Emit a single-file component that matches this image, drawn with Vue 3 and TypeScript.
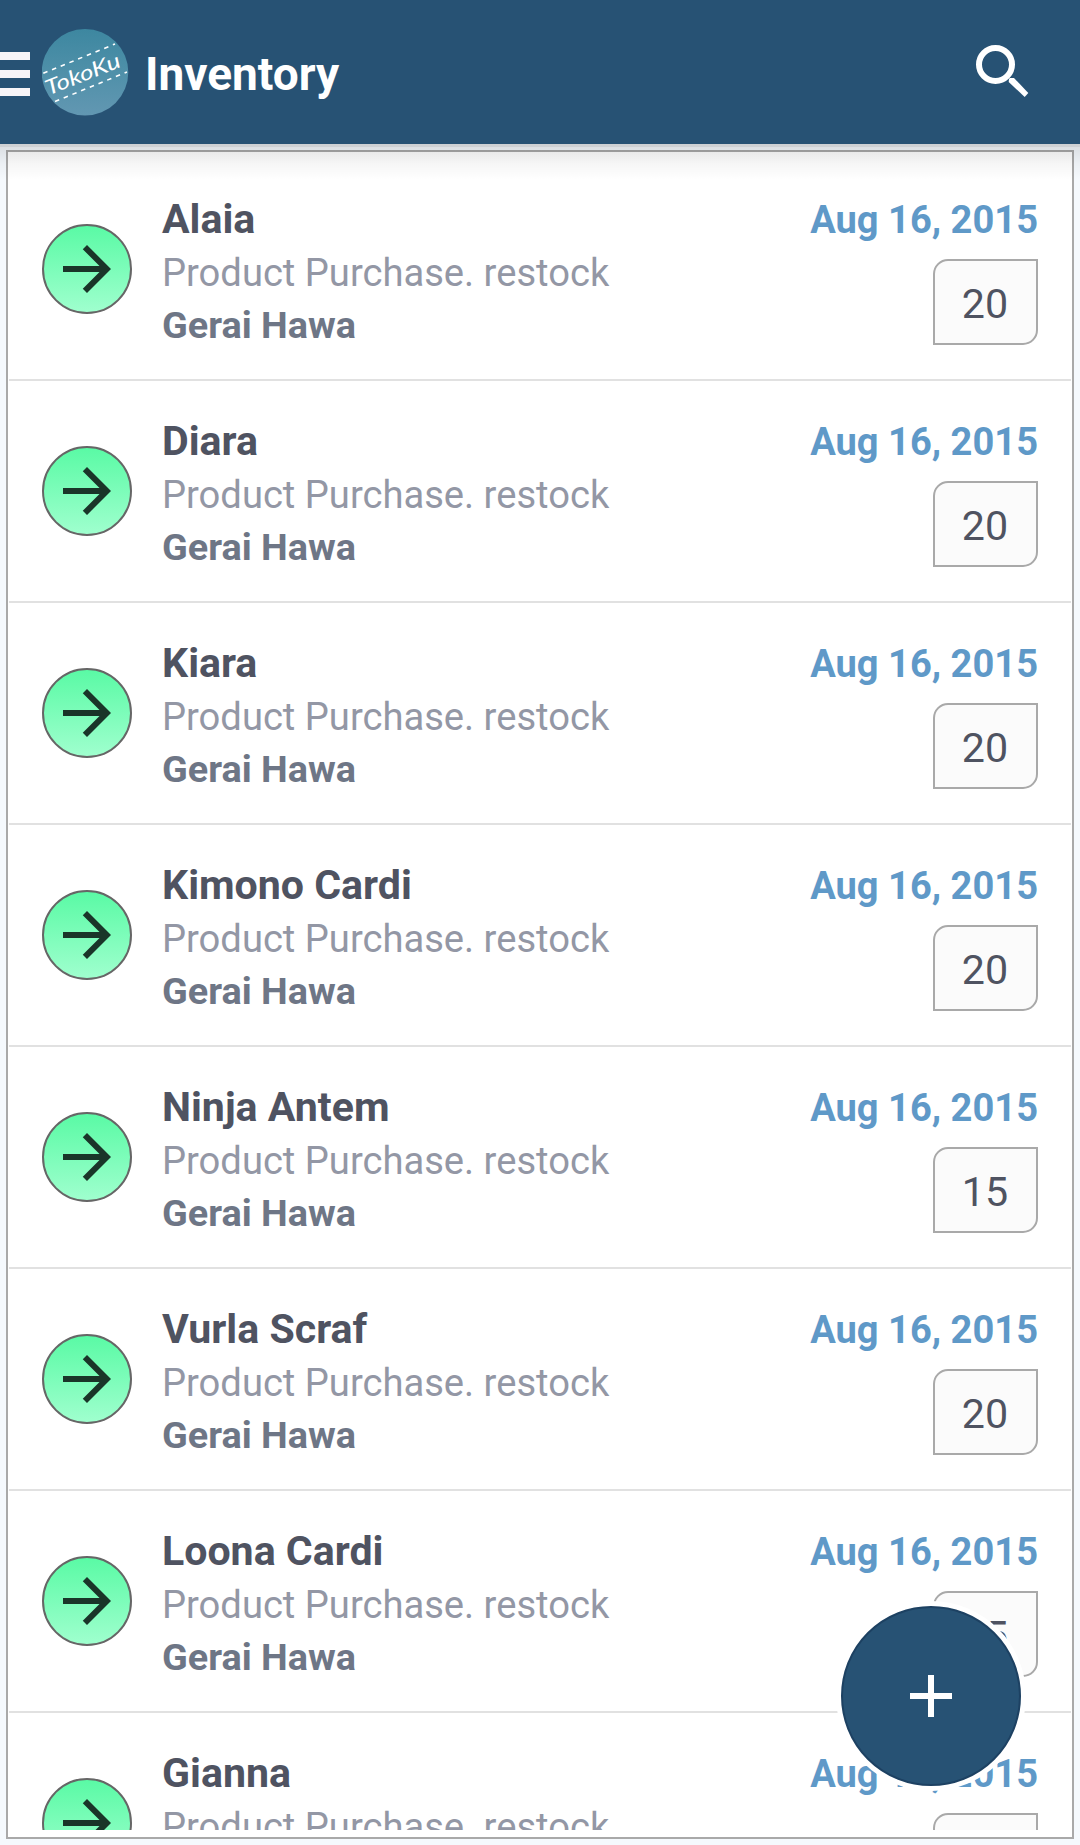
<script setup lang="ts">
interface StockEntry {
  name: string
  note: string
  shop: string
  date: string
  quantity: number
}

const quantities: [string, number][] = [
  ['Alaia', 20],
  ['Diara', 20],
  ['Kiara', 20],
  ['Kimono Cardi', 20],
  ['Ninja Antem', 15],
  ['Vurla Scraf', 20],
  ['Loona Cardi', 15],
  ['Gianna', 20],
]

const entries: StockEntry[] = quantities.map(([name, quantity]) => ({
  name,
  note: 'Product Purchase. restock',
  shop: 'Gerai Hawa',
  date: 'Aug 16, 2015',
  quantity,
}))
</script>

<template>
  <div class="screen">
    <header class="bar">
      <div class="menu"><i></i><i></i><i></i></div>
      <svg class="logo" width="88" height="88" viewBox="0 0 88 88">
        <defs>
          <linearGradient id="logoFill" x1="0" y1="0" x2="0" y2="1">
            <stop offset="0" stop-color="#3d87a0" />
            <stop offset="0.5" stop-color="#4f90a9" />
            <stop offset="1" stop-color="#6297b2" />
          </linearGradient>
        </defs>
        <circle cx="43" cy="44.3" r="43.3" fill="url(#logoFill)" />
        <g stroke="#fff" stroke-width="1.6" stroke-dasharray="4.5 4.9">
          <path d="M1.3 45.3L73 16" />
          <path d="M13 73.5L85 44" />
        </g>
        <text x="6.5" y="67.5" transform="rotate(-21.5 6.5 67.5)" textLength="79" lengthAdjust="spacingAndGlyphs" class="brand">TokoKu</text>
      </svg>
      <h1>Inventory</h1>
      <svg class="search" width="54" height="54" viewBox="0 0 54 54">
        <circle cx="20.5" cy="20.5" r="16.5" fill="none" stroke="#fff" stroke-width="6" />
        <path d="M34 35L35 34H39L53.3 49L49.7 53L33.7 38Z" fill="#fff" />
      </svg>
    </header>
    <main class="panel">
      <ul class="list">
        <li v-for="entry in entries" :key="entry.name" class="row">
          <span class="dot">
            <svg width="72" height="72" viewBox="0 0 24 24">
              <path d="M12 4l-1.41 1.41L16.17 11H4v2h12.17l-5.58 5.59L12 20l8-8z" fill="#1a3529" />
            </svg>
          </span>
          <div class="info">
            <div class="name">{{ entry.name }}</div>
            <div class="note">{{ entry.note }}</div>
            <div class="shop">{{ entry.shop }}</div>
          </div>
          <div class="side">
            <div class="date">{{ entry.date }}</div>
            <div class="qty">{{ entry.quantity }}</div>
          </div>
        </li>
      </ul>
    </main>
    <div class="shade"></div>
    <button class="fab" aria-label="Add">
      <svg width="42" height="42" viewBox="0 0 42 42"><path d="M18 0h6v18h18v6H24v18h-6V24H0v-6h18z" fill="#fff" /></svg>
    </button>
  </div>
</template>

<style>
body {
  margin: 0;
}
</style>

<style scoped>
.screen {
  position: relative;
  box-sizing: border-box;
  width: 1080px;
  height: 1845px;
  overflow: hidden;
  display: flex;
  flex-direction: column;
  background: #f5f9fd;
  font-family: Roboto, sans-serif;
}
.bar {
  flex: none;
  display: flex;
  height: 144px;
  background: #275274;
}
.menu {
  display: flex;
  flex-direction: column;
  gap: 10px;
  width: 30px;
  margin: 52px 12px 0 0;
}
.menu i {
  height: 8px;
  background: #f7f5f8;
}
.logo {
  margin-top: 28px;
}
.brand {
  font: italic 21px Lato, sans-serif;
  fill: #fff;
}
h1 {
  margin: 47px 0 0 15px;
  font-size: 46px;
  line-height: 54px;
  font-weight: 700;
  color: #fff;
}
.search {
  margin: 44px 51px 0 auto;
}
.panel {
  box-sizing: border-box;
  height: 1689px;
  margin: 6px 6px 0;
  padding: 7px 1px;
  border: 2px solid #a9a9a9;
  background: #fff;
}
.list {
  height: 1671px;
  margin: 0;
  padding: 0;
  overflow: hidden;
  list-style: none;
}
.row {
  box-sizing: border-box;
  display: flex;
  height: 222px;
  padding: 33px 33px 0;
  border-bottom: 2px solid #e1e1e1;
}
.dot {
  box-sizing: border-box;
  display: flex;
  align-items: center;
  justify-content: center;
  width: 90px;
  height: 90px;
  margin: 32px 30px 0 0;
  border: 2px solid #666;
  border-radius: 50%;
  background: linear-gradient(#5afaa5, #9fffce);
}
.info {
  flex: 1;
  white-space: nowrap;
}
.name {
  font-size: 41.1px;
  line-height: 54px;
  font-weight: 700;
  color: #4f5361;
}
.note {
  font-size: 38.15px;
  line-height: 54px;
  color: #9397a5;
}
.shop {
  font-size: 37.8px;
  line-height: 50px;
  font-weight: 700;
  color: #6e7686;
}
.side {
  display: flex;
  flex-direction: column;
  align-items: flex-end;
}
.date {
  font-size: 38.1px;
  line-height: 56px;
  font-weight: 700;
  color: #5f99c8;
}
.qty {
  box-sizing: border-box;
  width: 105px;
  height: 86px;
  margin-top: 11px;
  padding-right: 1px;
  border: 2px solid #a9a9a9;
  border-radius: 15px 0 15px 0;
  background: #fbfbfb;
  font-size: 41.2px;
  line-height: 86px;
  text-align: center;
  color: #4f5361;
}
.shade {
  position: absolute;
  top: 144px;
  left: 0;
  width: 100%;
  height: 36px;
  background: linear-gradient(rgba(0, 0, 0, 0.16) 0, rgba(0, 0, 0, 0.16) 3px, rgba(0, 0, 0, 0.1) 3px, rgba(0, 0, 0, 0.035) 20px, transparent);
}
.fab {
  position: absolute;
  right: 59px;
  bottom: 59px;
  box-sizing: border-box;
  display: flex;
  align-items: center;
  justify-content: center;
  width: 180px;
  height: 180px;
  padding: 0;
  border: 2px solid #1d4162;
  border-radius: 50%;
  background: #275274;
  box-shadow: 0 0 0 5px #fff;
}
</style>
